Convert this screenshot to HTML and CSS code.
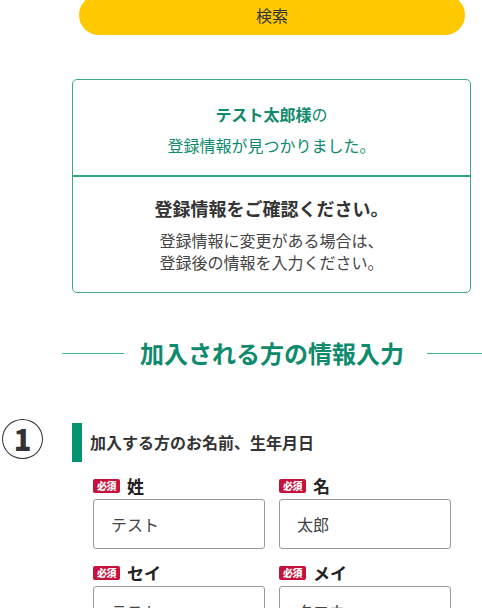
FILE: index.html
```html
<!DOCTYPE html>
<html lang="ja">
<head>
<meta charset="utf-8">
<link rel="stylesheet" href="styles.css">
</head>
<body>
<div class="page">
  <div class="search-btn">検索</div>

  <div class="result-box">
    <div class="result-top">
      <p class="found-name"><strong>テスト太郎様</strong>の</p>
      <p class="found-msg">登録情報が見つかりました。</p>
    </div>
    <div class="result-bottom">
      <p class="confirm-title">登録情報をご確認ください。</p>
      <p class="confirm-text">登録情報に変更がある場合は、<br>登録後の情報を入力ください。</p>
    </div>
  </div>

  <div class="section-heading">
    <span class="rule rule-left"></span>
    <h2>加入される方の情報入力</h2>
    <span class="rule rule-right"></span>
  </div>

  <div class="step">
    <div class="step-num">1</div>
    <div class="step-body">
      <h3 class="step-title">加入する方のお名前、生年月日</h3>
      <div class="fields">
        <div class="field">
          <div class="label"><span class="req">必須</span>姓</div>
          <div class="input">テスト</div>
        </div>
        <div class="field">
          <div class="label"><span class="req">必須</span>名</div>
          <div class="input">太郎</div>
        </div>
        <div class="field">
          <div class="label"><span class="req">必須</span>セイ</div>
          <div class="input">テスト</div>
        </div>
        <div class="field">
          <div class="label"><span class="req">必須</span>メイ</div>
          <div class="input">タロウ</div>
        </div>
      </div>
    </div>
  </div>
</div>
</body>
</html>
```
FILE: styles.css
```css
* { box-sizing: border-box; }
html, body { margin: 0; padding: 0; background: #fff; }
body {
  font-family: "Noto Sans CJK JP", "Noto Sans", sans-serif;
  color: #333;
  overflow: hidden;
}
p, h2, h3 { margin: 0; }

.page { width: 482px; }

.search-btn {
  margin: -5px 0 0 79px;
  width: 386px;
  height: 40px;
  border-radius: 20px;
  background: #ffc900;
  color: #333;
  font-size: 16px;
  line-height: 40px;
  text-align: center;
}

.result-box {
  margin: 44px 0 0 72px;
  width: 399px;
  border: 1px solid #3da98b;
  border-radius: 5px;
  text-align: center;
}
.result-top {
  padding: 19px 0 14px;
  border-bottom: 2px solid #2fa687;
  color: #0e8a6c;
  font-size: 16px;
  line-height: 31px;
}
.result-top strong { font-weight: 700; }
.result-bottom {
  padding: 18px 0 19px;
}
.confirm-title {
  font-size: 18px;
  font-weight: 700;
  line-height: 26px;
  color: #333;
}
.confirm-text {
  margin-top: 8px;
  font-size: 16px;
  line-height: 22px;
  color: #444;
}

.section-heading {
  margin-top: 43px;
  display: flex;
  align-items: center;
  padding-left: 62px;
}
.rule { height: 1px; background: #3cb894; display: block; }
.rule-left { width: 62px; margin-right: 16px; }
.rule-right { flex: 1; margin-left: 23px; }
.section-heading h2 {
  font-size: 24px;
  line-height: 34px;
  font-weight: 700;
  color: #0e8a6c;
  white-space: nowrap;
}

.step {
  margin-top: 50px;
  display: flex;
  align-items: flex-start;
}
.step-num {
  margin: -1px 0 0 2px;
  width: 41px;
  height: 40px;
  border: 1.5px solid #333;
  border-radius: 50%;
  font-family: "Noto Sans CJK JP", "Noto Sans", sans-serif;
  font-weight: 900;
  font-size: 29px;
  line-height: 37px;
  text-align: center;
  color: #333;
  flex: none;
}
.step-body { margin-left: 29px; }
.step-title {
  margin-top: 3px;
  height: 39px;
  border-left: 10px solid #04936f;
  padding-left: 8px;
  font-size: 16px;
  font-weight: 700;
  line-height: 39px;
  color: #333;
}

.fields {
  margin: 14px 0 0 21px;
  display: grid;
  grid-template-columns: 172px 172px;
  column-gap: 14px;
  row-gap: 14px;
}
.label {
  display: flex;
  align-items: center;
  height: 20px;
  font-size: 17px;
  font-weight: 700;
  line-height: 20px;
  color: #222;
}
.req {
  display: inline-block;
  width: 27px;
  height: 14px;
  margin-right: 7px;
  border-radius: 2px;
  background: #c8113a;
  color: #fff;
  font-size: 10px;
  font-weight: 900;
  line-height: 14px;
  text-align: center;
  letter-spacing: -0.5px;
}
.input {
  margin-top: 3px;
  height: 50px;
  border: 1px solid #999;
  border-radius: 3px;
  padding-left: 17px;
  font-size: 16px;
  line-height: 48px;
  color: #444;
}
```
